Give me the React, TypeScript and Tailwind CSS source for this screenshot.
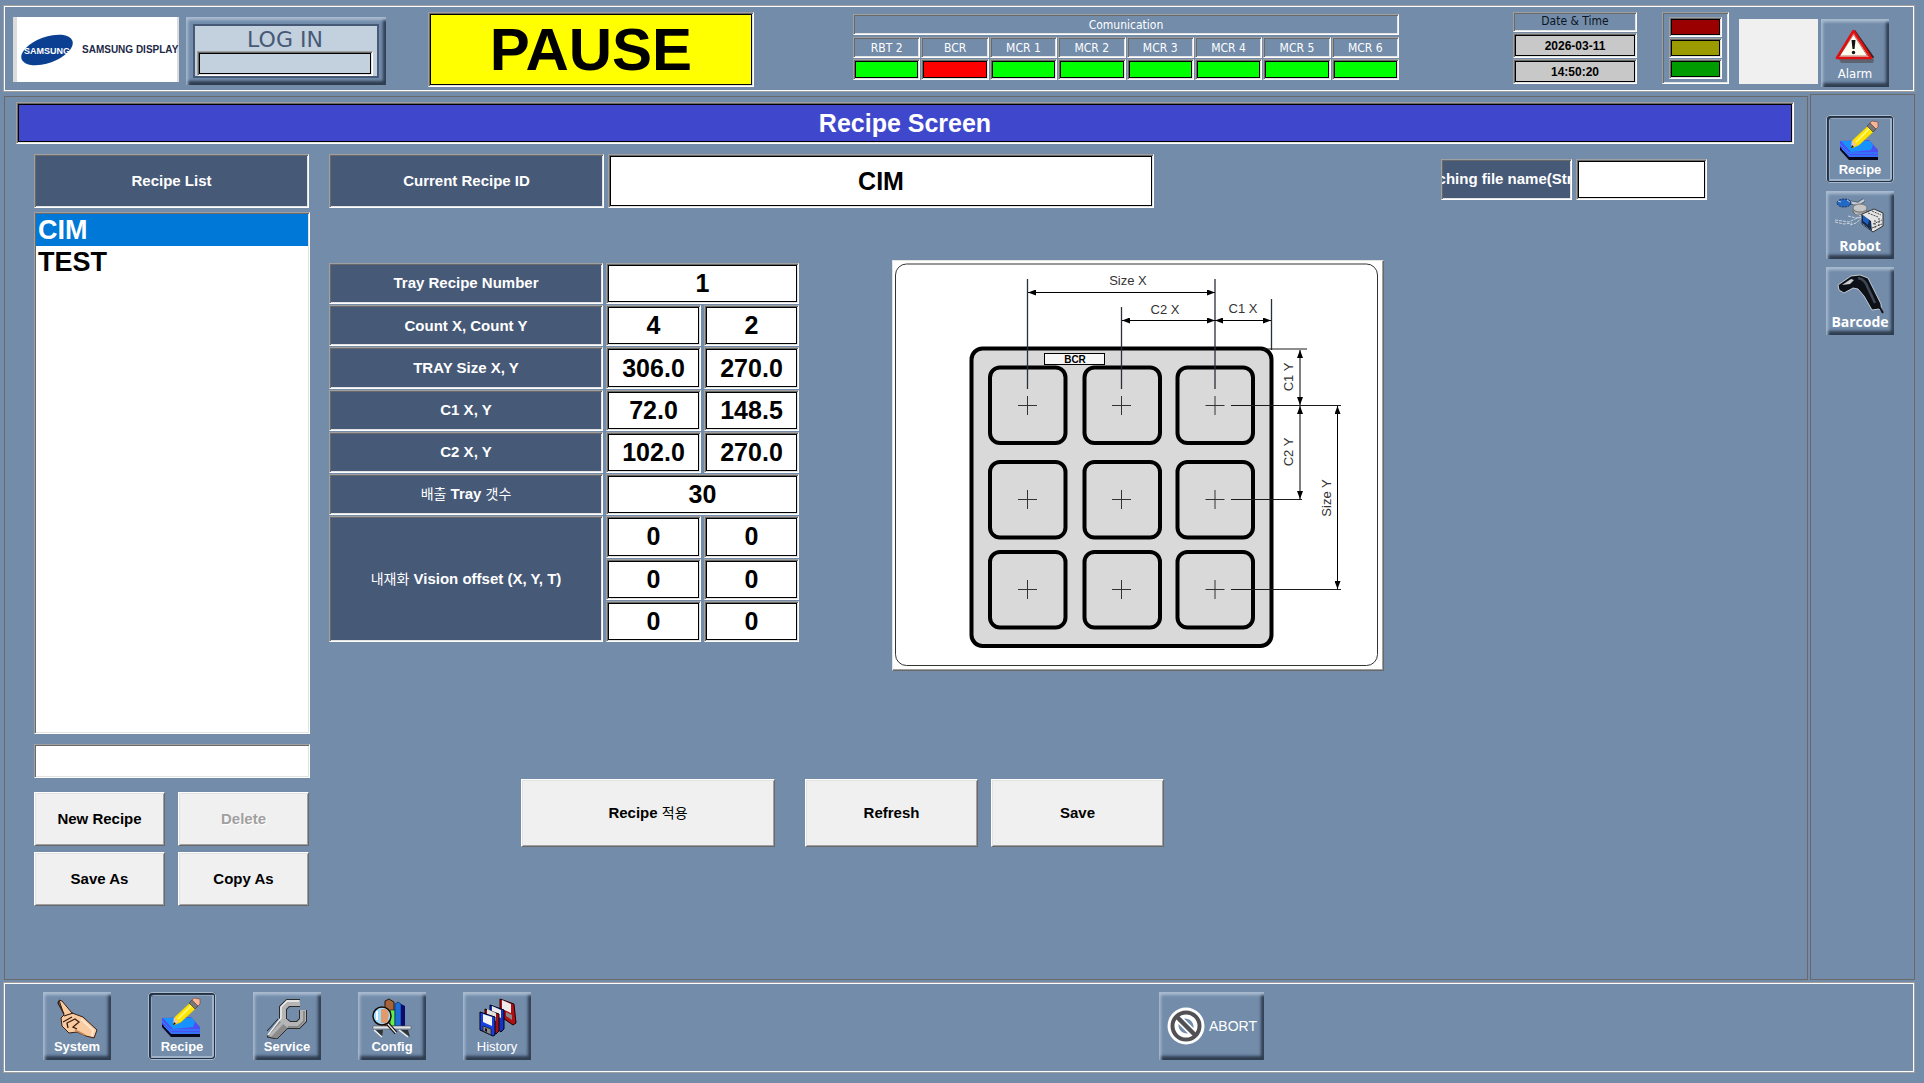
import { useState } from "react";
import type { ReactNode } from "react";

const sunken =
  "border border-t-[#a0a0a0] border-l-[#a0a0a0] border-r-white border-b-white shadow-[inset_1px_1px_#696969,inset_-1px_-1px_#e3e3e3]";
const field =
  "border border-t-[#a0a0a0] border-l-[#a0a0a0] border-r-white border-b-white shadow-[inset_1px_1px_#696969,inset_-1px_-1px_#e3e3e3,inset_0_0_0_2px_#000]";
const raised =
  "bg-[#f0f0f0] border border-t-white border-l-white border-r-[#696969] border-b-[#696969] shadow-[inset_1px_1px_#e3e3e3,inset_-1px_-1px_#a0a0a0]";
const bevel =
  "bg-[#728caa] shadow-[inset_2px_3px_3px_#a9bbd0,inset_-3px_-4px_3px_#2f3d50]";
const label = "bg-[#465977] text-white text-[15px] font-bold flex items-center justify-center";
const tahoma = "font-['DejaVu_Sans_Condensed','DejaVu_Sans',sans-serif]";

function Logo() {
  return (
    <div className="w-[166px] h-[65px] bg-white border-l-4 border-r-2 border-[#dcdcdc] flex items-center gap-2 pl-[3px]">
      <svg viewBox="0 0 54 34" className="w-[54px] h-[34px] shrink-0">
        <ellipse cx="27" cy="17" rx="27" ry="13" fill="#0b3f92" transform="rotate(-20 27 17)" />
        <text x="27" y="21" fontSize="9" fontWeight="bold" fill="#fff" textAnchor="middle">
          SAMSUNG
        </text>
      </svg>
      <span className="text-[10px] font-bold whitespace-nowrap text-[#1c2947]">SAMSUNG DISPLAY</span>
    </div>
  );
}

function Icon({ children }: { children: ReactNode }) {
  return (
    <svg viewBox="0 0 68 47" className="w-[68px] h-[47px] shrink-0" aria-hidden="true">
      {children}
    </svg>
  );
}

function HandIcon() {
  return (
    <Icon>
      <path d="M16 8l3 1 10 12 11 4 14 13-3 8-8-2-9-4-8 1-7-7-1-8 3-3z" fill="#f9cba0" stroke="#3a1d10" />
      <path d="M16 9l-1 2 6 11M21 24l9-3M20 30l9-5M25 36l-1-5 8-4 4 3-6 5 4 2" fill="none" stroke="#3a1d10" strokeWidth="1.3" />
      <path d="M38 27l12 11-1 6" fill="none" stroke="#ffe6cf" strokeWidth="2" />
      <path d="M32 38l10 5" stroke="#c98b5c" strokeWidth="1.5" />
    </Icon>
  );
}

function PencilIcon() {
  return (
    <Icon>
      <path d="M14 31v4l9 10h29v-4z" fill="#06061c" />
      <path d="M14 26l29-1 9 10v7H23l-9-10z" fill="#4b50f2" />
      <path d="M14 29l9 9h29M16 34l8 7h28" fill="none" stroke="#1f93ff" />
      <path d="M15 26h29l3 4-2 5-20 2z" fill="#1793ff" />
      <path d="M26 33l1-8 15-14 6 5-15 14z" fill="#ffe600" stroke="#e8c600" strokeWidth=".6" />
      <path d="M30 27L44 13" stroke="#fff68a" strokeWidth="1.6" />
      <path d="M26 25l-1 7 6-2z" fill="#f4c69a" />
      <path d="M25 33l1-3 2 2z" fill="#111" />
      <path d="M41 11l3-3 6 6-3 3z" fill="#777" stroke="#333" strokeWidth=".6" />
      <path d="M44 8l2-2 6 1v5l-2 2z" fill="#f5b79a" stroke="#7a3a28" strokeWidth=".6" />
    </Icon>
  );
}

function WrenchIcon() {
  return (
    <Icon>
      <path d="M14 39l11-12" stroke="#222" strokeWidth="1" />
      <path d="M47 11H35l-5 5v12l6 5h9l5-5V18" fill="none" stroke="#2c2c2c" strokeWidth="8" />
      <path d="M29 25L14 45l10 2 13-13z" fill="#8b8b8b" stroke="#2c2c2c" />
      <path d="M47 11H35l-5 5v12l6 5h9l5-5V18" fill="none" stroke="#b5b5b5" strokeWidth="6" />
      <path d="M31 29L17 44" stroke="#b5b5b5" strokeWidth="3" />
      <path d="M46 9H34l-6 6v11L15 43" fill="none" stroke="#f2f2f2" strokeWidth="1.400" />
      <path d="M35 35h10l6-6V19" fill="none" stroke="#7c7c7c" strokeWidth="1.400" />
    </Icon>
  );
}

function BooksIcon() {
  return (
    <Icon>
      <path d="M27 9l4-2 5 3v24h-9z" fill="#a5643a" stroke="#2a1408" />
      <path d="M32 18h5v16h-5z" fill="#63f04a" stroke="#123" strokeWidth=".7" />
      <path d="M37 12l3-2 3 2v22h-6z" fill="#1c6fd6" stroke="#0b2e66" strokeWidth=".7" />
      <path d="M43 12l4 2v20h-4z" fill="#0a0a70" />
      <path d="M15 34h38v3H15z" fill="#dfe2e6" stroke="#555" strokeWidth=".6" />
      <path d="M18 38h7l-1 7zM43 38h7l2 7z" fill="#333" />
      <path d="M16 38l8 7M41 38l9 7" stroke="#eee" strokeWidth="1.5" />
      <circle cx="24" cy="24" r="9" fill="#9fdcff" stroke="#150a05" strokeWidth="1.5" />
      <path d="M23 17h6l2 6-2 8h-6z" fill="#e09a6c" />
      <path d="M19 19v9" stroke="#fff" strokeWidth="2" />
      <path d="M30 32l8 9" stroke="#111" strokeWidth="3.5" />
      <path d="M30 32l8 9" stroke="#e9e9e9" strokeWidth="1.3" />
    </Icon>
  );
}

function DisksIcon() {
  return (
    <Icon>
      <path d="M37 7l14 5 2 19-3 2-13-9z" fill="#b00f14" stroke="#200" />
      <path d="M39 8l9 4v9l-9-4z" fill="#ececec" />
      <path d="M43 24l6 4v-5l-6-3z" fill="#888" />
      <path d="M27 13l14 5v19l-3 3-11-9z" fill="#1233c4" stroke="#001" />
      <path d="M29 14l9 4v8l-9-4z" fill="#ececec" />
      <path d="M22 17l14 5v17l-3 3-11-9z" fill="#a01015" stroke="#100" />
      <path d="M24 17l9 4v8l-9-4z" fill="#e0e0e0" />
      <path d="M17 20l15 5v18l-2 1-13-6z" fill="#1640e0" stroke="#001" />
      <path d="M20 22l9 3v9l-9-4z" fill="#f4f4f4" />
      <path d="M20 34l8 3v6l-8-4z" fill="#8a8a8a" stroke="#111" strokeWidth=".7" />
      <path d="M22 36l2 1v3l-2-1z" fill="#111" />
    </Icon>
  );
}

function RobotIcon() {
  return (
    <Icon>
      <path d="M22 11l10 2 6-4" fill="none" stroke="#4a5868" strokeWidth="4" />
      <path d="M22 11l10 2 6-4" fill="none" stroke="#c3cbd3" strokeWidth="2.4" />
      <ellipse cx="18" cy="12" rx="7" ry="4" fill="#2169c4" stroke="#16305c" strokeDasharray="2 1" />
      <path d="M12 10l3 1M21 9l3 2" stroke="#bcd" />
      <ellipse cx="34" cy="20" rx="7" ry="4" fill="#a2a5a8" stroke="#666" />
      <ellipse cx="34" cy="17" rx="7" ry="4" fill="#c6c6c6" stroke="#777" />
      <path d="M9 29l8 1 6 1 6-3 6-2M9 31l9 2 8-1M22 25l8 2 7-1M24 34l6-2 6-5M29 22l8 4" fill="none" stroke="#c9d2dc" strokeDasharray="3 1" />
      <path d="M36 23l12-5 9 4v13l-10 6-11-8z" fill="#e4e4e4" stroke="#333" />
      <path d="M36 24l9 6 1 10-10-8z" fill="#12294f" />
      <path d="M37 24l6 5-1 5-5-4z" fill="#1f5fc0" />
      <path d="M42 22l10 4M46 20l9 4M49 29v9M53 27v9M47 33l9-4M46 37l10-4" stroke="#444" strokeDasharray="2 1" />
    </Icon>
  );
}

function ScannerIcon() {
  return (
    <Icon>
      <path
        d="M12 18L25 9l9-1 8 3 5 10 8 16v4l2 5-4-4-7 1-8-14-6-7-5-1-9 5-5-3z"
        fill="#0d1117"
        stroke="#dfe6ee"
        strokeWidth=".8"
      />
      <path d="M16 18l9-6 3 1-4 4z" fill="#c9ced4" />
      <path d="M32 11c6 1 8 5 10 10l7 15" fill="none" stroke="#3f4854" strokeWidth="2.5" />
      <path d="M53 39l4 7" stroke="#0d1117" strokeWidth="2" />
    </Icon>
  );
}

function AlarmIcon() {
  return (
    <Icon>
      <path d="M18 40h35l-1 4H20z" fill="#5b6470" />
      <path d="M33 12l19 27" stroke="#3c2222" strokeWidth="3" />
      <path d="M32.500 12L50 39H16z" fill="#fffdf0" stroke="#e01010" strokeWidth="2.6" strokeLinejoin="round" />
      <path d="M32.500 15.500L46.500 37h-28z" fill="none" stroke="#8a1a10" strokeWidth=".6" />
      <path d="M30.500 21h4l-1 9h-2z" fill="#111" />
      <circle cx="32.500" cy="33.500" r="1.700" fill="#111" />
    </Icon>
  );
}

type TileProps = {
  name: string;
  icon: ReactNode;
  active?: boolean;
  text?: string;
};

function Tile({ name, icon, active, text = "font-bold" }: TileProps) {
  return (
    <button
      className={`size-[68px] shrink-0 flex flex-col items-center text-white text-[13px] leading-4 ${
        active
          ? "rounded bg-[#728caa] shadow-[inset_0_0_0_1px_#a9bbd0,inset_2px_2px_1px_1px_#223042,inset_-1px_-1px_0_1px_#223042,inset_0_0_0_4px_#9fb3ca]"
          : bevel
      }`}
    >
      {icon}
      <span className={text}>{name}</span>
    </button>
  );
}

const links = ["RBT 2", "BCR", "MCR 1", "MCR 2", "MCR 3", "MCR 4", "MCR 5", "MCR 6"];

function Communication() {
  return (
    <div className={`w-[546px] flex flex-col gap-[2px] mt-[2px] ml-[99px] text-white text-[12px] leading-none ${tahoma}`}>
      <div className={`h-[21px] flex items-center justify-center ${sunken}`}>Comunication</div>
      <div className="grid grid-cols-8 gap-x-px">
        {links.map((name) => (
          <div key={name} className="flex flex-col gap-px">
            <div className={`h-[21px] flex items-center justify-center ${sunken}`}>{name}</div>
            <div className={`h-[21px] ${field} ${name === "BCR" ? "bg-[#ff0000]" : "bg-[#00ff00]"}`} />
          </div>
        ))}
      </div>
    </div>
  );
}

function Header() {
  return (
    <header className="h-[87px] shrink-0 flex items-start pl-2 pr-6 pt-[5px] border-2 border-white outline outline-1 -outline-offset-1 outline-[#a0a0a0]">
      <div className="mt-[5px]">
        <Logo />
      </div>
      <button className={`w-[200px] h-[68px] ml-[7px] mt-[5px] p-[7px] ${bevel}`}>
        <span className="h-full flex flex-col items-center bg-[#c3d0de] border-2 border-[#465977] pt-[3px] pl-[2px] pr-1">
          <span className="flex-1 flex items-center text-[22px] leading-none text-[#465977] font-['DejaVu_Sans',sans-serif]">
            LOG IN
          </span>
          <span className={`h-[25px] w-full ${field}`} />
        </span>
      </button>
      <div
        className={`w-[326px] h-[75px] ml-[42px] bg-[#ffff00] text-black text-[60px] leading-none font-bold flex items-center justify-center ${field}`}
      >
        PAUSE
      </div>
      <Communication />
      <div className="flex ml-auto">
        <div className="w-[124px] flex flex-col gap-px text-[12px] text-black text-center">
          <div className={`h-5 leading-4 text-[#0c1420] ${tahoma} ${sunken}`}>Date &amp; Time</div>
          <div className={`h-[25px] leading-6 font-bold bg-[#c8c8c8] ${field}`}>2026-03-11</div>
          <div className={`h-[25px] leading-6 font-bold bg-[#c8c8c8] ${field}`}>14:50:20</div>
        </div>
        <div className={`w-[67px] h-[72px] ml-[25px] px-[6px] py-1 flex flex-col gap-px ${sunken}`}>
          <div className={`flex-1 bg-[#9b0000] ${field}`} />
          <div className={`flex-1 bg-[#9b9b00] ${field}`} />
          <div className={`flex-1 bg-[#009b00] ${field}`} />
        </div>
        <div className="w-[79px] h-[65px] mt-[7px] ml-[10px] bg-[#f0f0f0]" />
        <div className="mt-[7px] ml-[3px]">
          <Tile name="Alarm" icon={<AlarmIcon />} text={tahoma} />
        </div>
      </div>
    </header>
  );
}

function RecipeList() {
  const [selected, setSelected] = useState("CIM");
  return (
    <div className="w-[276px] shrink-0 flex flex-col">
      <h2 className={`h-[54px] mr-px ${label} ${sunken}`}>Recipe List</h2>
      <div role="listbox" aria-label="Recipe List" className={`h-[522px] mt-1 p-px flex flex-col bg-white ${sunken}`}>
        {["CIM", "TEST"].map((name) => (
          <button
            key={name}
            role="option"
            aria-selected={selected === name}
            onClick={() => setSelected(name)}
            className={`h-8 px-[2px] text-left text-[27px] leading-8 font-bold ${
              selected === name ? "bg-[#0078d7] text-white" : "text-black"
            }`}
          >
            {name}
          </button>
        ))}
      </div>
      <input aria-label="Recipe name" className={`h-[34px] mt-[10px] px-1 bg-white text-[15px] font-bold ${sunken}`} />
      <div className="grid grid-cols-2 gap-x-[13px] gap-y-[6px] mt-[14px] mr-px text-[15px] font-bold">
        <button className={`h-[54px] ${raised}`}>New Recipe</button>
        <button disabled className={`h-[54px] text-[#a0a0a0] [text-shadow:1px_1px_#fff] ${raised}`}>
          Delete
        </button>
        <button className={`h-[54px] ${raised}`}>Save As</button>
        <button className={`h-[54px] ${raised}`}>Copy As</button>
      </div>
    </div>
  );
}

const rows: { id: string; title: ReactNode; values: string[] }[] = [
  { id: "number", title: "Tray Recipe Number", values: ["1"] },
  { id: "count", title: "Count X, Count Y", values: ["4", "2"] },
  { id: "size", title: "TRAY Size X, Y", values: ["306.0", "270.0"] },
  { id: "c1", title: "C1 X, Y", values: ["72.0", "148.5"] },
  { id: "c2", title: "C2 X, Y", values: ["102.0", "270.0"] },
  {
    id: "out",
    title: (
      <>
        <span className="font-normal text-[14px]">배출</span> Tray <span className="font-normal text-[14px]">갯수</span>
      </>
    ),
    values: ["30"],
  },
  {
    id: "offset",
    title: (
      <>
        <span className="font-normal text-[14px]">내재화</span> Vision offset (X, Y, T)
      </>
    ),
    values: ["0", "0", "0", "0", "0", "0"],
  },
];

function TrayForm() {
  return (
    <form className="w-[470px] h-[379px] shrink-0 mt-[3px] grid grid-cols-[274px_95px_95px] grid-rows-9 gap-x-[3px] gap-y-px">
      {rows.map((row) => [
        <label
          key={row.id}
          htmlFor={`${row.id}-0`}
          className={`${label} ${sunken} ${row.values.length > 2 ? "row-span-3" : ""}`}
        >
          <span>{row.title}</span>
        </label>,
        ...row.values.map((value, i) => (
          <input
            key={`${row.id}-${i}`}
            id={`${row.id}-${i}`}
            defaultValue={value}
            className={`min-w-0 w-full bg-white text-black text-center text-[25px] leading-none font-bold ${field} ${
              row.values.length === 1 ? "col-span-2" : ""
            }`}
          />
        )),
      ])}
    </form>
  );
}

const cellX = [98, 192.5, 285.5];
const cellY = [107.5, 202, 292];
const crossX = [135.5, 229.5, 323];
const crossY = [145.5, 239.5, 329.5];

const dimensions = [
  [136, 32.5, 323, 32.5],
  [230, 60.5, 323, 60.5],
  [323, 60.5, 379, 60.5],
  [408, 90, 408, 145],
  [408, 146, 408, 239],
  [445.5, 146, 445.5, 329],
];

function TrayDiagram() {
  return (
    <div className="w-[492px] h-[411px] shrink-0 ml-[93px] bg-white border border-t-[#e3e3e3] border-l-[#e3e3e3] border-r-[#696969] border-b-[#696969] shadow-[inset_-1px_-1px_#a0a0a0]">
      <svg viewBox="1 1 490 409" className="w-full h-full" fontSize="13" fill="#333">
        <defs>
          <marker id="arrow" viewBox="0 0 8 6" refX="8" refY="3" markerWidth="8" markerHeight="6" markerUnits="userSpaceOnUse" orient="auto-start-reverse">
            <path d="M0 0L8 3L0 6z" fill="#000" />
          </marker>
        </defs>
        <rect x="3.500" y="4" width="482" height="401.500" rx="11" fill="none" stroke="#333" />
        <rect x="79.500" y="88.500" width="300" height="297.500" rx="11" fill="#d9d9d9" stroke="#000" strokeWidth="4" />
        {cellY.map((y, r) =>
          cellX.map((x, c) => (
            <g key={`${r}-${c}`}>
              <rect x={x} y={y} width="75.500" height="75.500" rx="10" fill="none" stroke="#000" strokeWidth="4" />
              <path d={`M${crossX[c] - 9.5} ${crossY[r]}h19M${crossX[c]} ${crossY[r] - 9.5}v19`} stroke="#333" />
            </g>
          ))
        )}
        <path d="M135.500 19V129M229.500 47V129M323 19V129M379.500 39V90" stroke="#2b2f36" strokeWidth="1.300" />
        <path d="M371 89H415M339 145.500H449M339 239.500H410M339 329.500H449" stroke="#1c1c1c" />
        {dimensions.map(([x1, y1, x2, y2]) => (
          <line
            key={`${x1}-${y1}`}
            x1={x1}
            y1={y1}
            x2={x2}
            y2={y2}
            stroke="#000"
            markerStart="url(#arrow)"
            markerEnd="url(#arrow)"
          />
        ))}
        <g textAnchor="middle">
          <text x="236" y="25">Size X</text>
          <text x="273" y="54">C2 X</text>
          <text x="351" y="53">C1 X</text>
          <text transform="translate(401 117) rotate(-90)">C1 Y</text>
          <text transform="translate(401 192) rotate(-90)">C2 Y</text>
          <text transform="translate(439 238) rotate(-90)">Size Y</text>
          <rect x="152.500" y="93.500" width="60" height="11" fill="#f6f6f6" stroke="#000" />
          <text x="183" y="103" fontSize="10" fill="#000" fontWeight="bold">
            BCR
          </text>
        </g>
      </svg>
    </div>
  );
}

function RecipeScreen() {
  return (
    <main className="flex-1 min-w-0 mt-[2px] ml-px pt-[5px] pl-[11px] pr-[13px] border border-[#696969]">
      <h1
        className={`h-[42px] bg-[#3f48cc] text-white text-[25px] leading-none font-bold flex items-center justify-center ${field}`}
      >
        Recipe Screen
      </h1>
      <div className="flex gap-[19px] mt-[10px] pl-[18px]">
        <RecipeList />
        <div className="flex-1 min-w-0">
          <div className="flex items-center">
            <label htmlFor="current" className={`w-[275px] h-[54px] ${label} ${sunken}`}>
              Current Recipe ID
            </label>
            <input
              id="current"
              defaultValue="CIM"
              className={`w-[546px] h-[54px] ml-1 bg-white text-black text-center text-[25px] leading-none font-bold ${field}`}
            />
            <label
              htmlFor="teaching"
              className={`w-[131px] h-[41px] ml-auto mb-1 whitespace-nowrap overflow-hidden ${label} ${sunken}`}
            >
              Teaching file name(String)
            </label>
            <input
              id="teaching"
              className={`w-[131px] h-[41px] ml-1 mr-[87px] mb-1 px-1 bg-white text-[15px] font-bold ${field}`}
            />
          </div>
          <div className="flex mt-[52px]">
            <TrayForm />
            <TrayDiagram />
          </div>
          <div className="flex mt-[108px] ml-48 text-[15px] font-bold">
            <button className={`w-[254px] h-[68px] ${raised}`}>
              Recipe <span className="font-normal text-[14px]">적용</span>
            </button>
            <button className={`w-[173px] h-[68px] ml-[30px] ${raised}`}>Refresh</button>
            <button className={`w-[173px] h-[68px] ml-[13px] ${raised}`}>Save</button>
          </div>
        </div>
      </div>
    </main>
  );
}

function SideMenu() {
  const wide = "font-bold text-[14px] font-['Open_Sans','Noto_Sans',sans-serif]";
  return (
    <aside className="w-[105px] shrink-0 pt-5 pl-[15px] flex flex-col gap-2 border border-[#696969]">
      <Tile name="Recipe" icon={<PencilIcon />} active />
      <Tile name="Robot" icon={<RobotIcon />} text={wide} />
      <Tile name="Barcode" icon={<ScannerIcon />} text={wide} />
    </aside>
  );
}

function Footer() {
  return (
    <footer className="h-[91px] shrink-0 flex items-start pt-2 pl-[38px] mt-[2px] border-2 border-white outline outline-1 -outline-offset-1 outline-[#a0a0a0]">
      <nav className="flex gap-[37px]">
        <Tile name="System" icon={<HandIcon />} />
        <Tile name="Recipe" icon={<PencilIcon />} active />
        <Tile name="Service" icon={<WrenchIcon />} />
        <Tile name="Config" icon={<BooksIcon />} />
        <Tile name="History" icon={<DisksIcon />} text="font-normal" />
      </nav>
      <button className={`w-[105px] h-[68px] ml-[628px] pl-2 flex items-center gap-1 text-white text-[14px] ${bevel}`}>
        <svg viewBox="0 0 38 38" className="size-[38px] shrink-0" aria-hidden="true">
          <circle cx="19" cy="19" r="18.500" fill="#fff" />
          <circle cx="19" cy="19" r="13.500" fill="#fff" stroke="#505055" strokeWidth="4" />
          <path d="M10 10l18 18" stroke="#505055" strokeWidth="4.500" />
          <path d="M11.500 17l9.500 9.500a8.500 8.500 0 0 1-9.500-9.500zM17 11.500l9.500 9.500a8.500 8.500 0 0 0-9.500-9.500z" fill="#728caa" />
        </svg>
        ABORT
      </button>
    </footer>
  );
}

function App() {
  return (
    <div className="min-h-screen flex flex-col bg-[#728caa] pt-[5px] pb-[10px] pl-[3px] pr-[9px] font-['Liberation_Sans','Noto_Sans_CJK_KR',sans-serif]">
      <Header />
      <div className="flex-1 flex gap-[2px] mt-[2px]">
        <RecipeScreen />
        <SideMenu />
      </div>
      <Footer />
    </div>
  );
}

export default App;
